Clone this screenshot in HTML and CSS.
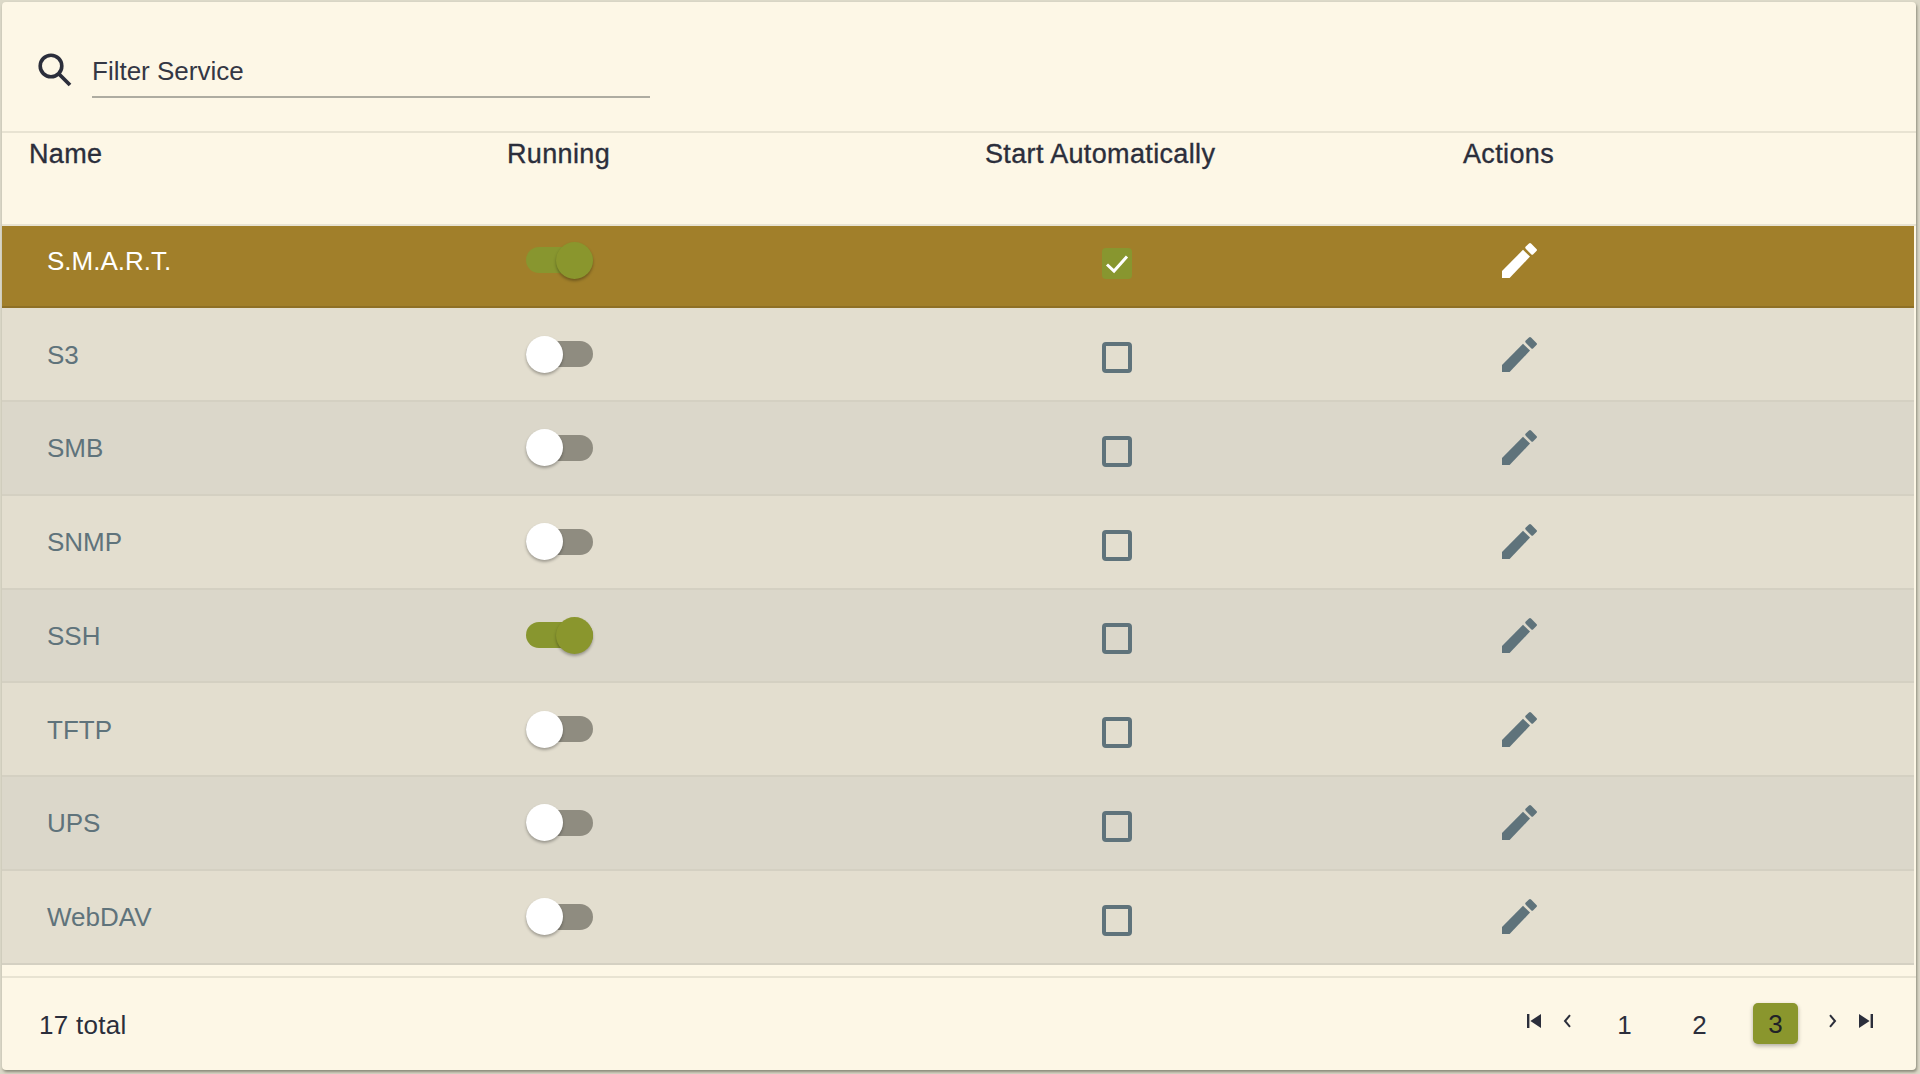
FILE: index.html
```html
<!DOCTYPE html>
<html lang="en">
<head>
<meta charset="utf-8">
<title>Services</title>
<link rel="stylesheet" href="styles.css">
</head>
<body>
<svg class="defs" width="0" height="0" aria-hidden="true">
  <symbol id="pencil" viewBox="0 0 35 35">
    <path d="M0 35V28L21 6.8L28 13.6L7.6 35Z"/>
    <path d="M24.8 4.6L28 1.6L33.4 7L30.2 10.2Z" stroke="currentColor" stroke-width="3" stroke-linejoin="round"/>
  </symbol>
</svg>
<main class="card">
  <header class="search">
    <svg class="search-icon" viewBox="0 0 36 36"><circle cx="14" cy="14" r="10.8" fill="none" stroke="currentColor" stroke-width="3.6"/><path d="M22 22L33 33" stroke="currentColor" stroke-width="3.8"/></svg>
    <input class="search-input" type="text" placeholder="Filter Service">
  </header>
  <div class="table-head">
    <div>Name</div><div>Running</div><div>Start Automatically</div><div>Actions</div>
  </div>
  <div class="rows">
    <div class="row selected">
      <div class="name">S.M.A.R.T.</div>
      <div class="cell-toggle"><span class="toggle on"><span class="knob"></span></span></div>
      <div class="cell-check"><span class="check checked"><svg viewBox="0 0 30 30"><path d="M5 16L12 22.5L25 8" fill="none" stroke="#fff" stroke-width="3"/></svg></span></div>
      <div class="cell-action"><svg class="pencil"><use href="#pencil"/></svg></div>
    </div>
    <div class="row">
      <div class="name">S3</div>
      <div class="cell-toggle"><span class="toggle"><span class="knob"></span></span></div>
      <div class="cell-check"><span class="check"></span></div>
      <div class="cell-action"><svg class="pencil"><use href="#pencil"/></svg></div>
    </div>
    <div class="row alt">
      <div class="name">SMB</div>
      <div class="cell-toggle"><span class="toggle"><span class="knob"></span></span></div>
      <div class="cell-check"><span class="check"></span></div>
      <div class="cell-action"><svg class="pencil"><use href="#pencil"/></svg></div>
    </div>
    <div class="row">
      <div class="name">SNMP</div>
      <div class="cell-toggle"><span class="toggle"><span class="knob"></span></span></div>
      <div class="cell-check"><span class="check"></span></div>
      <div class="cell-action"><svg class="pencil"><use href="#pencil"/></svg></div>
    </div>
    <div class="row alt">
      <div class="name">SSH</div>
      <div class="cell-toggle"><span class="toggle on"><span class="knob"></span></span></div>
      <div class="cell-check"><span class="check"></span></div>
      <div class="cell-action"><svg class="pencil"><use href="#pencil"/></svg></div>
    </div>
    <div class="row">
      <div class="name">TFTP</div>
      <div class="cell-toggle"><span class="toggle"><span class="knob"></span></span></div>
      <div class="cell-check"><span class="check"></span></div>
      <div class="cell-action"><svg class="pencil"><use href="#pencil"/></svg></div>
    </div>
    <div class="row alt">
      <div class="name">UPS</div>
      <div class="cell-toggle"><span class="toggle"><span class="knob"></span></span></div>
      <div class="cell-check"><span class="check"></span></div>
      <div class="cell-action"><svg class="pencil"><use href="#pencil"/></svg></div>
    </div>
    <div class="row">
      <div class="name">WebDAV</div>
      <div class="cell-toggle"><span class="toggle"><span class="knob"></span></span></div>
      <div class="cell-check"><span class="check"></span></div>
      <div class="cell-action"><svg class="pencil"><use href="#pencil"/></svg></div>
    </div>
  </div>
  <footer class="footer">
    <span class="total">17 total</span>
    <nav class="pager">
      <svg class="pg-icon wide" viewBox="0 0 14 14"><path d="M0 0H2.4V14H0ZM14 0V14L3.4 7Z"/></svg>
      <svg class="pg-icon narrow prev" viewBox="0 0 8 14"><path d="M7 1.2L2 7L7 12.8" fill="none" stroke="currentColor" stroke-width="2"/></svg>
      <span class="page first-page">1</span>
      <span class="page">2</span>
      <span class="page current">3</span>
      <svg class="pg-icon narrow next" viewBox="0 0 8 14"><path d="M1 1.2L6 7L1 12.8" fill="none" stroke="currentColor" stroke-width="2"/></svg>
      <svg class="pg-icon wide last" viewBox="0 0 14 14"><path d="M14 0H11.6V14H14ZM0 0V14L10.6 7Z"/></svg>
    </nav>
  </footer>
</main>
</body>
</html>
```

FILE: styles.css
```css
* { box-sizing: border-box; }
html, body { height: 100%; }
body {
  margin: 0;
  padding: 2px 4px 4px 2px;
  background: #dcd9c8;
  font-family: "Liberation Sans", Arial, sans-serif;
  font-size: 26px;
  color: #2b2e3b;
  overflow: hidden;
}
.defs { position: absolute; }
.card {
  display: flex;
  flex-direction: column;
  height: 1068px;
  background: #fdf7e6;
  border-radius: 4px;
  box-shadow: 1px 2px 3px rgba(70, 70, 55, .55);
}
.search {
  display: flex;
  height: 131px;
  flex: none;
  padding-left: 35px;
  border-bottom: 2px solid #e8e3d2;
}
.search-icon {
  width: 36px;
  height: 36px;
  margin-top: 50px;
  color: #2b2e3b;
  flex: none;
}
.search-input {
  width: 558px;
  height: 49px;
  margin: 47px 0 0 19px;
  padding: 0 0 2px;
  border: 0;
  border-bottom: 2px solid #aeaca1;
  background: transparent;
  font: inherit;
  color: inherit;
  outline: 0;
}
.search-input::placeholder { color: #343744; opacity: 1; }
.table-head {
  display: grid;
  grid-template-columns: repeat(4, 478px);
  flex: none;
  height: 92.5px;
  padding: 6px 0 0 27px;
  font-size: 27px;
  letter-spacing: .35px;
  line-height: 30px;
  color: #2b2e3b;
  -webkit-text-stroke: .35px #2b2e3b;
  border-bottom: 2px solid #e8e3d2;
}
.rows {
  flex: none;
  height: 739px;
  margin-right: 2px;
  overflow: hidden;
}
.row {
  display: grid;
  grid-template-columns: repeat(4, 478px);
  align-items: center;
  height: 93.75px;
  padding-left: 27px;
  background: #e3decf;
  color: #5f737b;
  border-bottom: 2px solid #d4d0c2;
}
.row.alt { background: #dbd7ca; }
.row.selected {
  margin-top: -11px;
  background: #a17f2a;
  color: #fff;
  border-bottom-color: #8e7026;
}
.name { padding: 2px 0 0 18px; font-size: 26px; }
.cell-toggle { padding-left: 18.5px; display: flex; }
.toggle {
  display: flex;
  align-items: center;
  width: 67.5px;
  height: 26px;
  border-radius: 13px;
  background: #8f8c80;
}
.toggle.on {
  justify-content: flex-end;
  background: #88962f;
}
.knob {
  width: 37px;
  height: 37px;
  flex: none;
  border-radius: 50%;
  background: #fff;
  box-shadow: 0 2px 3px rgba(0, 0, 0, .3);
}
.toggle.on .knob { background: #8a962d; }
.cell-check { display: flex; padding: 7px 0 0 117px; }
.check {
  display: block;
  width: 30px;
  height: 31px;
  border: 4px solid #5f737b;
  border-radius: 4px;
}
.check.checked {
  border: 0;
  background: #88962f;
}
.check svg { display: block; width: 30px; height: 31px; }
.cell-action { display: flex; padding-left: 39px; }
.pencil { width: 35px; height: 35px; fill: currentColor; }
.footer {
  display: flex;
  flex: 1;
  align-items: center;
  justify-content: space-between;
  margin-top: 11px;
  padding: 0 43px 0 37px;
  border-top: 2px solid #e8e3d2;
}
.total { padding-top: 4px; letter-spacing: .3px; }
.pager { display: flex; align-items: center; }
.pg-icon { height: 14px; fill: currentColor; color: #2b2e3b; margin-top: -5px; }
.pg-icon.wide { width: 14px; }
.pg-icon.narrow { width: 8px; }
.prev { margin-left: 22px; }
.next { margin-left: 31px; }
.last { margin-left: 22px; }
.page {
  width: 45px;
  height: 41px;
  margin-left: 30px;
  border-radius: 5px;
  text-align: center;
  line-height: 44px;
}
.first-page { margin-left: 31px; }
.page.current {
  margin-top: -1px;
  margin-left: 31px;
  background: #8a962d;
  color: #1f2228;
  line-height: 42px;
  box-shadow: 0 2px 4px rgba(0, 0, 0, .3);
}
```
